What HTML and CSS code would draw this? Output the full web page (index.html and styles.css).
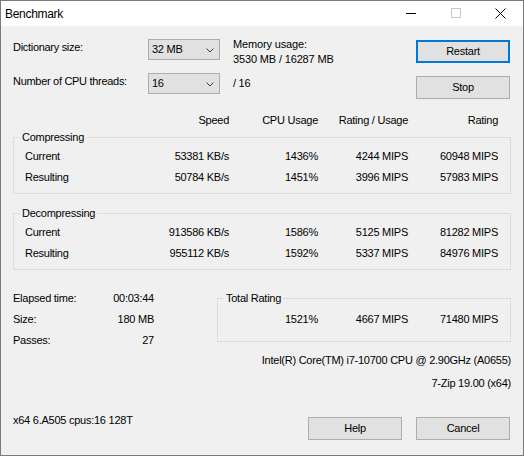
FILE: index.html
```html
<!DOCTYPE html>
<html>
<head>
<meta charset="utf-8">
<title>Benchmark</title>
<link rel="stylesheet" href="styles.css">
</head>
<body>
<div class="window">
  <div class="titlebar">
    <span class="title">Benchmark</span>
    <div class="caption">
      <span class="cap-btn"><svg width="10" height="10" viewBox="0 0 10 10"><path d="M0 5.5H10" stroke="#000" stroke-width="1"/></svg></span>
      <span class="cap-btn"><svg width="10" height="10" viewBox="0 0 10 10"><rect x="0.5" y="0.5" width="9" height="9" fill="none" stroke="#c6c6c6" stroke-width="1"/></svg></span>
      <span class="cap-btn"><svg width="11" height="11" viewBox="0 0 11 11"><path d="M0.5 0.5L10.5 10.5M10.5 0.5L0.5 10.5" stroke="#000" stroke-width="1"/></svg></span>
    </div>
  </div>
  <div class="content">
    <div class="top">
      <div class="settings">
        <span class="label">Dictionary size:</span>
        <div class="combo"><span>32 MB</span><svg class="chev" width="8" height="5" viewBox="0 0 8 5"><path d="M0.5 0.5L4 4L7.5 0.5" fill="none" stroke="#404040" stroke-width="1"/></svg></div>
        <div class="memory"><div>Memory usage:</div><div>3530 MB / 16287 MB</div></div>
        <span class="label">Number of CPU threads:</span>
        <div class="combo"><span>16</span><svg class="chev" width="8" height="5" viewBox="0 0 8 5"><path d="M0.5 0.5L4 4L7.5 0.5" fill="none" stroke="#404040" stroke-width="1"/></svg></div>
        <span class="threads">/ 16</span>
      </div>
      <div class="actions">
        <button class="btn default">Restart</button>
        <button class="btn">Stop</button>
      </div>
    </div>

    <div class="cols header">
      <span></span>
      <span class="num">Speed</span>
      <span class="num">CPU Usage</span>
      <span class="num">Rating / Usage</span>
      <span class="num">Rating</span>
    </div>

    <fieldset class="group comp">
      <legend>Compressing</legend>
      <div class="rows">
        <div class="cols">
          <span>Current</span>
          <span class="num">53381 KB/s</span>
          <span class="num">1436%</span>
          <span class="num">4244 MIPS</span>
          <span class="num">60948 MIPS</span>
        </div>
        <div class="cols">
          <span>Resulting</span>
          <span class="num">50784 KB/s</span>
          <span class="num">1451%</span>
          <span class="num">3996 MIPS</span>
          <span class="num">57983 MIPS</span>
        </div>
      </div>
    </fieldset>

    <fieldset class="group decomp">
      <legend>Decompressing</legend>
      <div class="rows">
        <div class="cols">
          <span>Current</span>
          <span class="num">913586 KB/s</span>
          <span class="num">1586%</span>
          <span class="num">5125 MIPS</span>
          <span class="num">81282 MIPS</span>
        </div>
        <div class="cols">
          <span>Resulting</span>
          <span class="num">955112 KB/s</span>
          <span class="num">1592%</span>
          <span class="num">5337 MIPS</span>
          <span class="num">84976 MIPS</span>
        </div>
      </div>
    </fieldset>

    <div class="bottom">
      <div class="stats">
        <div class="stat"><span>Elapsed time:</span><span>00:03:44</span></div>
        <div class="stat"><span>Size:</span><span>180 MB</span></div>
        <div class="stat"><span>Passes:</span><span>27</span></div>
      </div>
      <fieldset class="group total">
        <legend>Total Rating</legend>
        <div class="total-row">
          <span class="num">1521%</span>
          <span class="num">4667 MIPS</span>
          <span class="num">71480 MIPS</span>
        </div>
      </fieldset>
    </div>

    <div class="cpu">Intel(R) Core(TM) i7-10700 CPU @ 2.90GHz (A0655)</div>
    <div class="ver">7-Zip 19.00 (x64)</div>

    <div class="footer">
      <span class="sysinfo">x64 6.A505 cpus:16 128T</span>
      <div class="footer-btns">
        <button class="btn">Help</button>
        <button class="btn">Cancel</button>
      </div>
    </div>
  </div>
</div>
</body>
</html>
```

FILE: styles.css
```css
html, body {
  margin: 0;
  padding: 0;
  background: #f0f0f0;
}

body {
  font-family: "Liberation Sans", Arial, sans-serif;
  font-size: 11px;
  color: #000;
}

.window {
  width: 524px;
  height: 456px;
  box-sizing: border-box;
  border: 1px solid #7a7a7a;
  background: #f0f0f0;
  display: flex;
  flex-direction: column;
  letter-spacing: -0.25px;
  overflow: hidden;
}

.titlebar {
  height: 25px;
  flex-shrink: 0;
  background: #fff;
  display: flex;
  align-items: center;
}

.title {
  font-size: 12px;
  letter-spacing: -0.3px;
  padding-left: 4px;
  line-height: 14px;
}

.caption {
  margin-left: auto;
  display: flex;
  align-self: stretch;
}

.cap-btn {
  width: 45px;
  display: flex;
  justify-content: center;
  align-items: flex-start;
  padding-top: 7px;
  box-sizing: border-box;
}

.cap-btn svg {
  display: block;
}

.content {
  flex: 1;
  display: flex;
  flex-direction: column;
  padding: 0 12px;
}

/* top settings area */
.top {
  display: flex;
  align-items: flex-start;
  padding-top: 13px;
}

.settings {
  display: grid;
  grid-template-columns: 135px 72px auto;
  grid-template-rows: 21px 21px;
  row-gap: 13px;
}

.label {
  line-height: 13px;
  margin-top: 2px;
  align-self: start;
  white-space: nowrap;
  letter-spacing: -0.3px;
}

.combo {
  box-sizing: border-box;
  height: 21px;
  width: 72px;
  border: 1px solid #adadad;
  background: #e1e1e1;
  display: flex;
  align-items: center;
  justify-content: space-between;
  padding: 0 5px 0 3px;
  line-height: 13px;
}

.chev {
  display: block;
  margin-top: 1px;
}

.memory {
  margin-left: 13px;
  margin-top: -2px;
  line-height: 15px;
  align-self: start;
  white-space: nowrap;
  letter-spacing: -0.15px;
}

.threads {
  margin-left: 13px;
  line-height: 13px;
  align-self: center;
  white-space: nowrap;
}

.actions {
  margin-left: auto;
  margin-right: 1px;
  margin-top: 1px;
  display: flex;
  flex-direction: column;
  gap: 13px;
}

.btn {
  width: 94px;
  height: 23px;
  box-sizing: border-box;
  border: 1px solid #adadad;
  background: #e1e1e1;
  color: #000;
  font: inherit;
  letter-spacing: inherit;
  padding: 0;
  margin: 0;
  line-height: 13px;
}

.btn.default {
  border: 2px solid #0078d7;
}

/* result columns */
.cols {
  display: grid;
  grid-template-columns: 104px 100px 89px 90px 90px;
  line-height: 13px;
  white-space: nowrap;
}

.num {
  text-align: right;
}

.header {
  margin-top: 15px;
  padding-left: 12px;
}

.group {
  margin: 0;
  padding: 0;
  border: 1px solid #dcdcdc;
  min-width: 0;
}

.group legend {
  margin-left: 6px;
  padding: 0 2px;
  line-height: 13px;
}

.comp {
  margin-top: 4px;
}

.decomp {
  margin-top: 13px;
}

.rows {
  display: flex;
  flex-direction: column;
  gap: 8px;
  padding: 6px 0 9px 11px;
}

/* bottom area */
.bottom {
  display: flex;
  align-items: flex-start;
  margin-top: 22px;
}

.stats {
  width: 141px;
  display: flex;
  flex-direction: column;
  gap: 8px;
  line-height: 13px;
}

.stat {
  display: flex;
  justify-content: space-between;
  white-space: nowrap;
}

.total {
  margin-left: auto;
  width: 294px;
  box-sizing: border-box;
}

.total-row {
  display: grid;
  grid-template-columns: 100px 90px 90px;
  line-height: 13px;
  padding: 8px 0 15px 0;
  white-space: nowrap;
}

.cpu {
  margin-top: 7px;
  text-align: right;
  line-height: 13px;
  white-space: nowrap;
}

.ver {
  margin-top: 10px;
  text-align: right;
  line-height: 13px;
}

.footer {
  margin-top: 24px;
  display: flex;
  align-items: flex-start;
}

.sysinfo {
  line-height: 13px;
  white-space: nowrap;
}

.footer-btns {
  margin-left: auto;
  margin-right: 1px;
  margin-top: 3px;
  display: flex;
  gap: 14px;
}
```
